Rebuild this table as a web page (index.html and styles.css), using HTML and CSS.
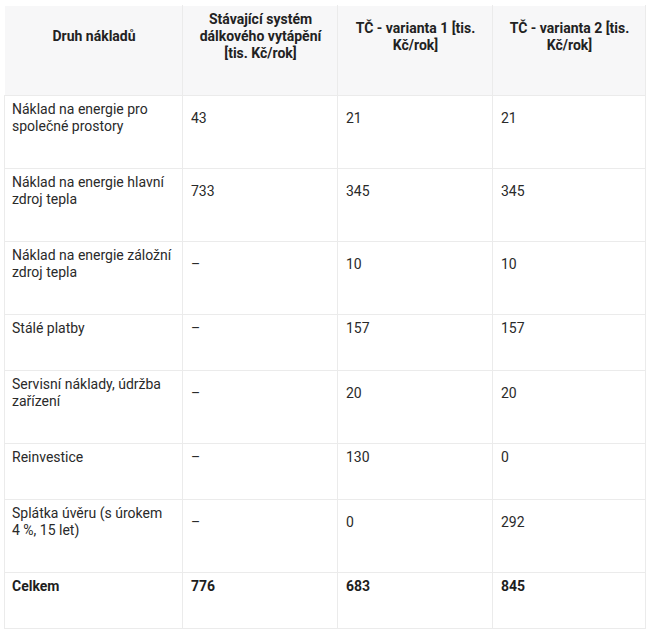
FILE: index.html
```html
<!DOCTYPE html>
<html lang="cs">
<head>
<meta charset="utf-8">
<title>Druh nákladů</title>
<link rel="stylesheet" href="styles.css">
</head>
<body>
<table class="costs">
  <colgroup>
    <col class="c1"><col class="c2"><col class="c3"><col class="c4">
  </colgroup>
  <thead>
    <tr>
      <th>Druh nákladů</th>
      <th>Stávající systém dálkového vytápění [tis. Kč/rok]</th>
      <th>TČ - varianta 1 [tis. Kč/rok]</th>
      <th>TČ - varianta 2 [tis. Kč/rok]</th>
    </tr>
  </thead>
  <tbody>
    <tr><td>Náklad na energie pro společné prostory</td><td>43</td><td>21</td><td>21</td></tr>
    <tr><td>Náklad na energie hlavní zdroj tepla</td><td>733</td><td>345</td><td>345</td></tr>
    <tr><td>Náklad na energie záložní zdroj tepla</td><td>–</td><td>10</td><td>10</td></tr>
    <tr><td>Stálé platby</td><td>–</td><td>157</td><td>157</td></tr>
    <tr><td>Servisní náklady, údržba zařízení</td><td>–</td><td>20</td><td>20</td></tr>
    <tr><td>Reinvestice</td><td>–</td><td>130</td><td>0</td></tr>
    <tr><td>Splátka úvěru (s úrokem 4&nbsp;%, 15 let)</td><td>–</td><td>0</td><td>292</td></tr>
    <tr class="total"><td>Celkem</td><td>776</td><td>683</td><td>845</td></tr>
  </tbody>
</table>
</body>
</html>
```

FILE: styles.css
```css
html, body {
  margin: 0;
  background: #ffffff;
}
body {
  padding: 5px 7px 0 4px;
  font-family: Roboto, "Liberation Sans", Arial, sans-serif;
  font-size: 14px;
  line-height: 17px;
  color: #2a2a2a;
}
.costs {
  border-collapse: collapse;
  table-layout: fixed;
  width: 641px;
}
.c1 { width: 178px; }
.c2 { width: 155px; }
.c3 { width: 155px; }
.c4 { width: 153px; }
.costs th,
.costs td {
  border: 1px solid #ebebeb;
  padding: 5px 7px 33px 8px;
  vertical-align: middle;
  text-align: left;
}
.costs th {
  background: #f7f7f8;
  font-weight: 700;
  color: #222222;
  text-align: center;
}
.costs thead th {
  border-top-color: #ffffff;
  border-left-color: #ffffff;
}
.costs td:first-child {
  padding-left: 7px;
}
.total td {
  font-weight: 700;
  color: #1e1e1e;
}
```
